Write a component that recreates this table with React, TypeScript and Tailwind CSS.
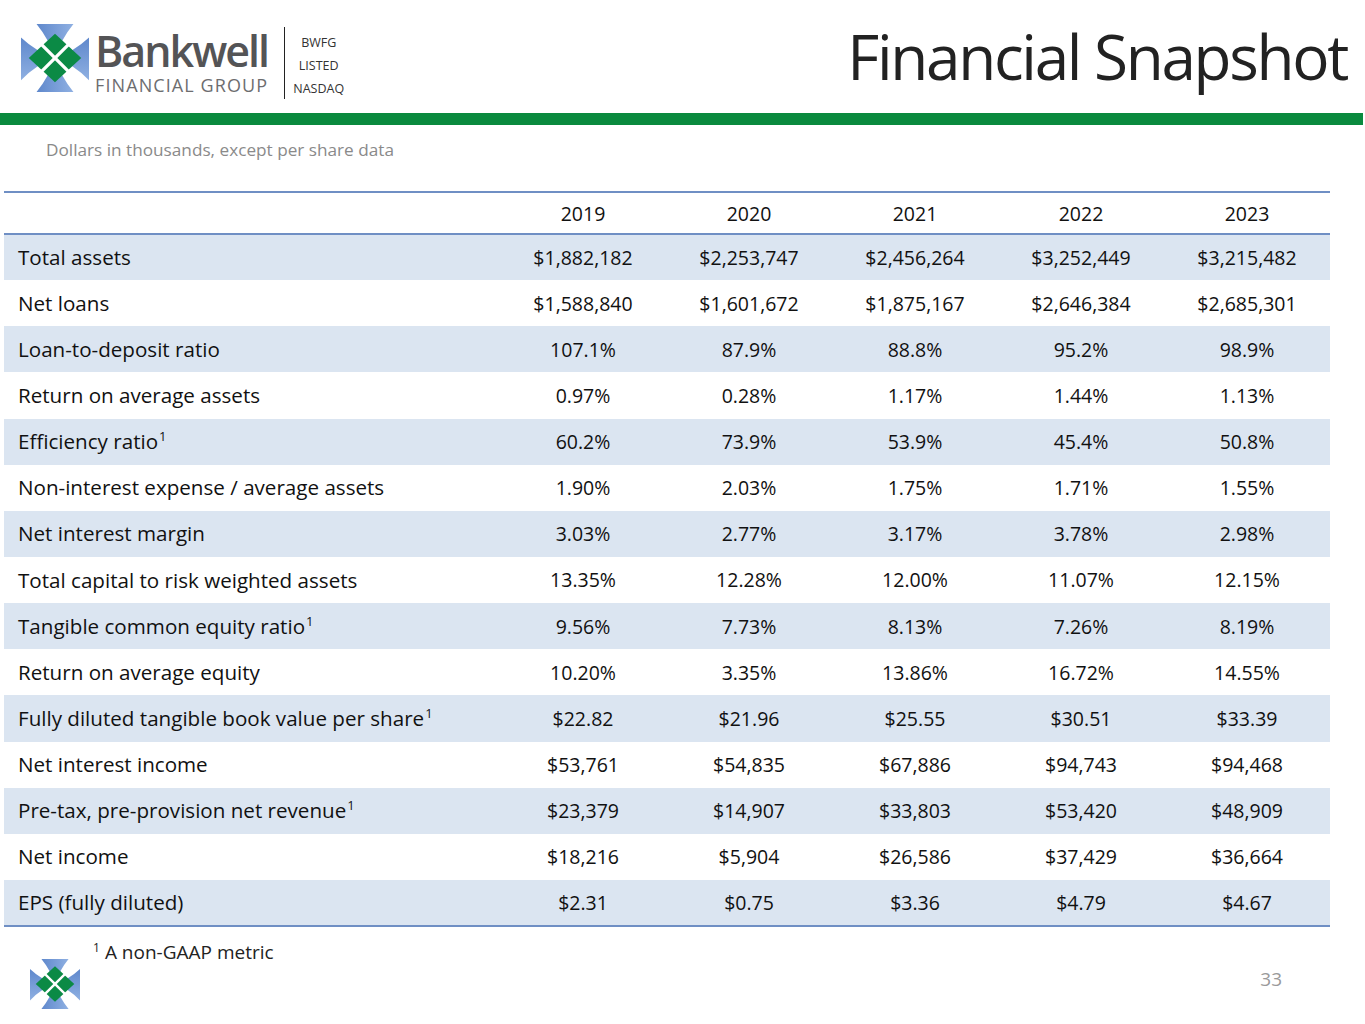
const years = ["2019", "2020", "2021", "2022", "2023"];

type Row = { label: string; sup?: boolean; values: string[] };

const rows: Row[] = [
  { label: "Total assets", values: ["$1,882,182", "$2,253,747", "$2,456,264", "$3,252,449", "$3,215,482"] },
  { label: "Net loans", values: ["$1,588,840", "$1,601,672", "$1,875,167", "$2,646,384", "$2,685,301"] },
  { label: "Loan-to-deposit ratio", values: ["107.1%", "87.9%", "88.8%", "95.2%", "98.9%"] },
  { label: "Return on average assets", values: ["0.97%", "0.28%", "1.17%", "1.44%", "1.13%"] },
  { label: "Efficiency ratio", sup: true, values: ["60.2%", "73.9%", "53.9%", "45.4%", "50.8%"] },
  { label: "Non-interest expense / average assets", values: ["1.90%", "2.03%", "1.75%", "1.71%", "1.55%"] },
  { label: "Net interest margin", values: ["3.03%", "2.77%", "3.17%", "3.78%", "2.98%"] },
  { label: "Total capital to risk weighted assets", values: ["13.35%", "12.28%", "12.00%", "11.07%", "12.15%"] },
  { label: "Tangible common equity ratio", sup: true, values: ["9.56%", "7.73%", "8.13%", "7.26%", "8.19%"] },
  { label: "Return on average equity", values: ["10.20%", "3.35%", "13.86%", "16.72%", "14.55%"] },
  { label: "Fully diluted tangible book value per share", sup: true, values: ["$22.82", "$21.96", "$25.55", "$30.51", "$33.39"] },
  { label: "Net interest income", values: ["$53,761", "$54,835", "$67,886", "$94,743", "$94,468"] },
  { label: "Pre-tax, pre-provision net revenue", sup: true, values: ["$23,379", "$14,907", "$33,803", "$53,420", "$48,909"] },
  { label: "Net income", values: ["$18,216", "$5,904", "$26,586", "$37,429", "$36,664"] },
  { label: "EPS (fully diluted)", values: ["$2.31", "$0.75", "$3.36", "$4.79", "$4.67"] },
];

function Mark({ className }: { className?: string }) {
  // four blue arms, green diamond split by a white cross
  return (
    <svg viewBox="0 0 70 70" className={className}>
      <defs>
        <linearGradient id="armA" x1="0" y1="0" x2="1" y2="0">
          <stop offset="0" stopColor="#5f88cc" />
          <stop offset="1" stopColor="#8fb0e2" />
        </linearGradient>
        <linearGradient id="armB" x1="0" y1="0" x2="0" y2="1">
          <stop offset="0" stopColor="#5f88cc" />
          <stop offset="1" stopColor="#8fb0e2" />
        </linearGradient>
      </defs>
      <path d="M16 0 L54 0 Q41 16 35 35 Q29 16 16 0 Z" fill="url(#armA)" />
      <path d="M16 70 L54 70 Q41 54 35 35 Q29 54 16 70 Z" fill="url(#armA)" />
      <path d="M0 14 L0 58 Q16 41 35 35 Q16 29 0 14 Z" fill="url(#armB)" />
      <path d="M70 14 L70 58 Q54 41 35 35 Q54 29 70 14 Z" fill="url(#armB)" />
      <path d="M35 10 L62 35 L35 60 L8 35 Z" fill="#0b8a45" />
      <g stroke="#fff" strokeWidth="3.4">
        <line x1="13" y1="13" x2="57" y2="57" />
        <line x1="57" y1="13" x2="13" y2="57" />
      </g>
    </svg>
  );
}

export default function App() {
  return (
    <div
      className="relative w-[1365px] h-[1024px] overflow-hidden bg-white text-[#111]"
      style={{ fontFamily: '"Open Sans", "Noto Sans", sans-serif' }}
    >
      {/* ── Header ── */}
      <div className="flex items-start h-[113px]">
        <div className="flex items-start pl-[20px] pt-[24px]">
          <Mark className="w-[70px] h-[68px] shrink-0" />
          <div className="ml-[5px] flex flex-col mt-[6px]">
            <span className="text-[43px] leading-[42px] font-semibold tracking-[-2px] text-[#545456]">
              Bankwell
            </span>
            <span className="text-[18px] leading-[20px] mt-[3px] tracking-[1.1px] text-[#6d6d6f]">
              FINANCIAL GROUP
            </span>
          </div>
          <div className="ml-[16px] h-[72px] w-px bg-[#222] mt-[3px]" />
          <div className="ml-[8px] flex flex-col items-center text-[12.5px] leading-[23px] text-[#333] mt-[7px]">
            <span>BWFG</span>
            <span>LISTED</span>
            <span>NASDAQ</span>
          </div>
        </div>
        <h1 className="ml-auto mr-[18px] mt-[18px] text-[62px] leading-[76px] text-[#222] tracking-[-2.3px]">
          Financial Snapshot
        </h1>
      </div>
      <div className="h-[12px] bg-[#0a8a3e] mr-[2px]" />

      <p className="ml-[46px] mt-[14px] text-[17.2px] leading-[22px] text-[#8a8a8a]">
        Dollars in thousands, except per share data
      </p>

      {/* ── Table ── */}
      <table className="ml-[4px] mt-[30px] w-[1326px] border-collapse text-[19.5px]">
        <colgroup>
          <col className="w-[496px]" />
          {years.map((y) => (
            <col key={y} className="w-[166px]" />
          ))}
        </colgroup>
        <thead>
          <tr className="h-[42px] border-t-2 border-b-2 border-[#6f8fc4]">
            <th />
            {years.map((y) => (
              <th key={y} className="text-center font-normal pt-[2px]">
                {y}
              </th>
            ))}
          </tr>
        </thead>
        <tbody className="border-b-2 border-[#6f8fc4]">
          {rows.map((r, i) => (
            <tr key={r.label} className={`h-[46.15px] ${i % 2 === 0 ? "bg-[#dbe5f1]" : "bg-white"}`}>
              <td className="pl-[14px] whitespace-nowrap text-[20.6px]">
                {r.label}
                {r.sup && (
                  <span className="text-[13px] leading-none ml-[1px] relative top-[-8px]">1</span>
                )}
              </td>
              {r.values.map((v, j) => (
                <td key={j} className="text-center whitespace-nowrap">
                  {v}
                </td>
              ))}
            </tr>
          ))}
        </tbody>
      </table>

      {/* ── Footer ── */}
      <div className="flex items-start mt-[12px]">
        <Mark className="ml-[30px] mt-[20px] w-[50px] h-[50px] shrink-0" />
        <p className="ml-[13px] text-[19px] leading-[26px] text-[#222]">
          <span className="text-[12px] leading-none mr-[5px] relative top-[-7px]">1</span>A non-GAAP metric
        </p>
        <span className="ml-auto mr-[83px] mt-[26px] text-[19px] text-[#9a9a9a]">33</span>
      </div>
    </div>
  );
}
